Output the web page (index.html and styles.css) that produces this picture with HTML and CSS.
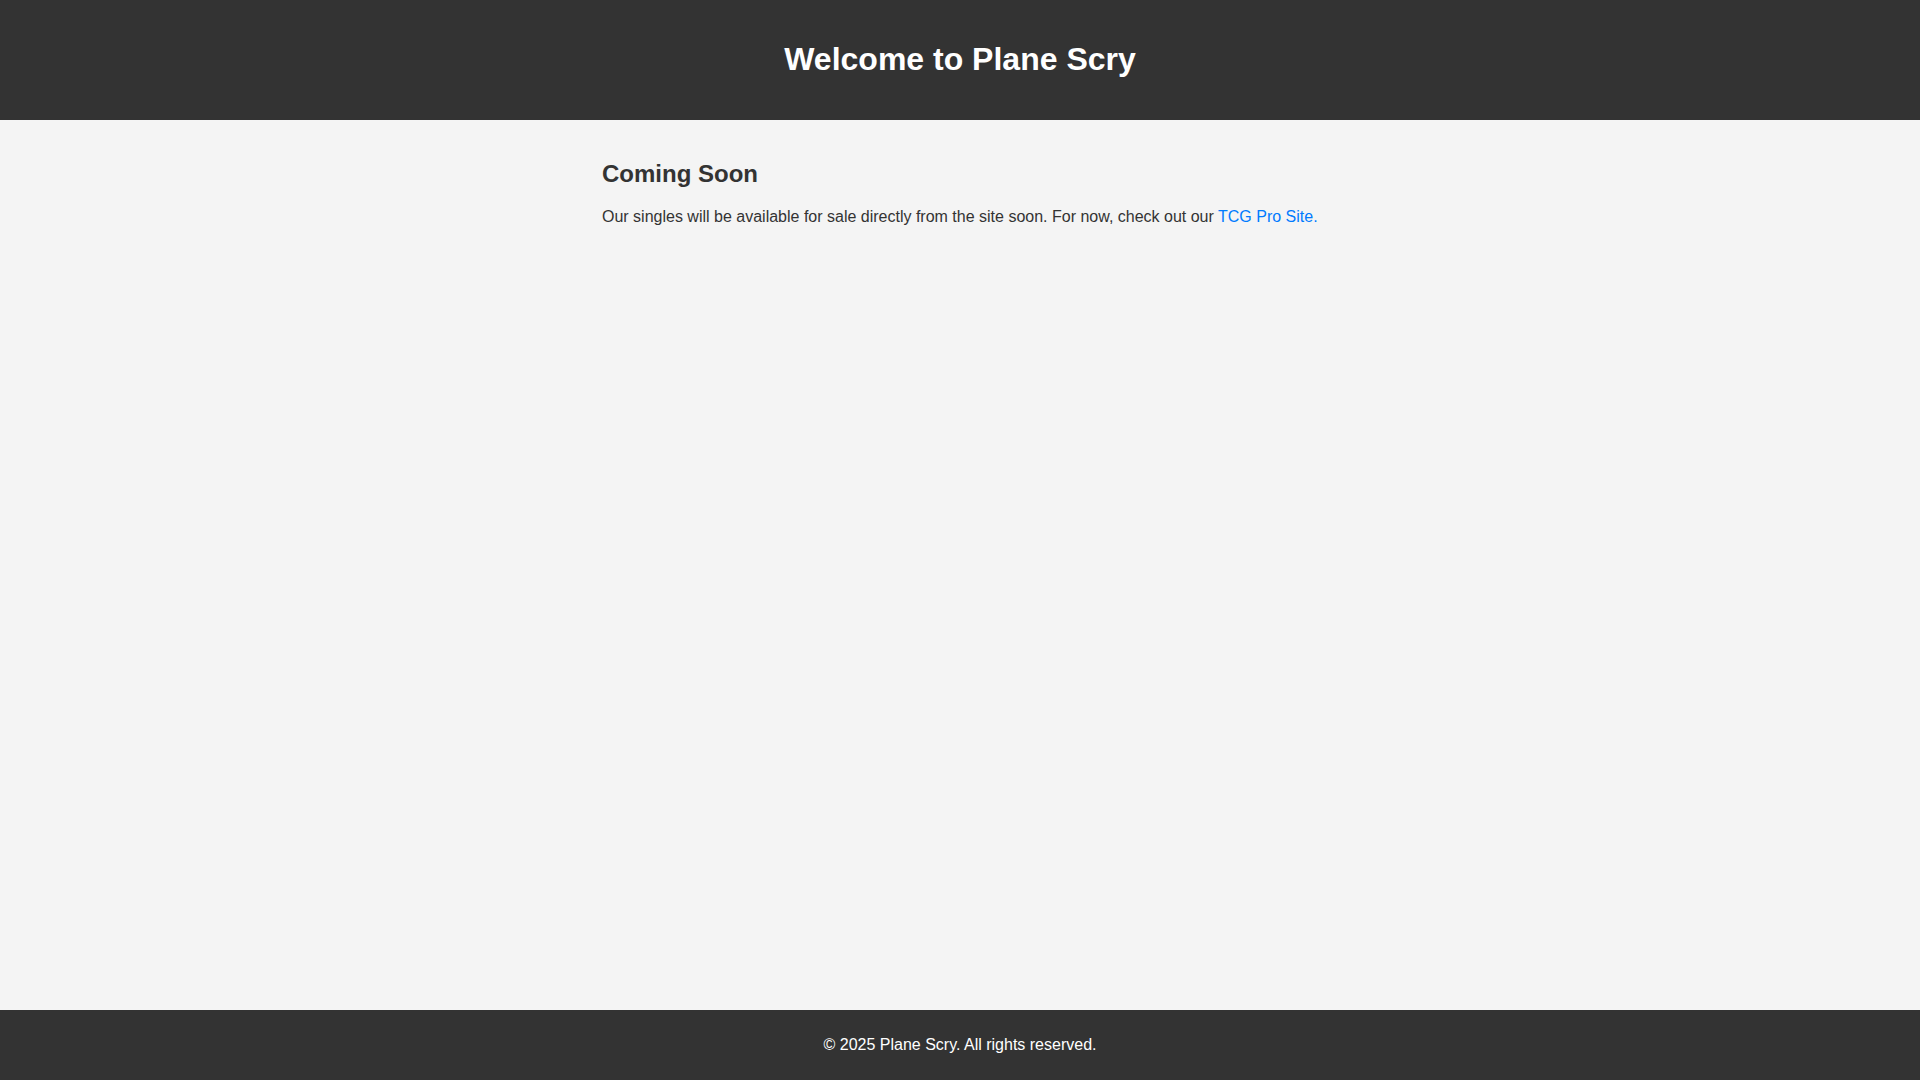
FILE: index.html
```html
<!DOCTYPE html>
<html lang="en">
<head>
<meta charset="utf-8">
<title>Plane Scry</title>
<link rel="stylesheet" href="styles.css">
</head>
<body>
<header class="site-header">
  <h1 class="site-title">Welcome to Plane Scry</h1>
</header>
<main class="content">
  <h2 class="content-title">Coming Soon</h2>
  <p class="content-text">Our singles will be available for sale directly from the site soon. For now, check out our <a class="content-link" href="#">TCG Pro Site.</a></p>
</main>
<footer class="site-footer">
  <p class="footer-text">&copy; 2025 Plane Scry. All rights reserved.</p>
</footer>
</body>
</html>
```

FILE: styles.css
```css
html, body {
  margin: 0;
  padding: 0;
}
body {
  font-family: "Liberation Sans", Arial, sans-serif;
  background: #f4f4f4;
  color: #333;
  min-height: 100vh;
  display: flex;
  flex-direction: column;
}
.site-header {
  background: #333;
  color: #fff;
  text-align: center;
  padding: 20px;
}
.site-title {
  font-size: 32px;
  margin: 21.44px 0;
}
.content {
  flex: 1;
  width: 716px;
  margin: 0 auto;
  padding: 20px 0;
}
.content-title {
  font-size: 24px;
  margin: 19.92px 0;
}
.content-text {
  font-size: 16px;
  margin: 16px 0;
}
.content-link {
  color: #007bff;
  text-decoration: none;
}
.site-footer {
  background: #333;
  color: #fff;
  text-align: center;
  padding: 10px;
}
.footer-text {
  margin: 16px 0;
  font-size: 16px;
}
```
